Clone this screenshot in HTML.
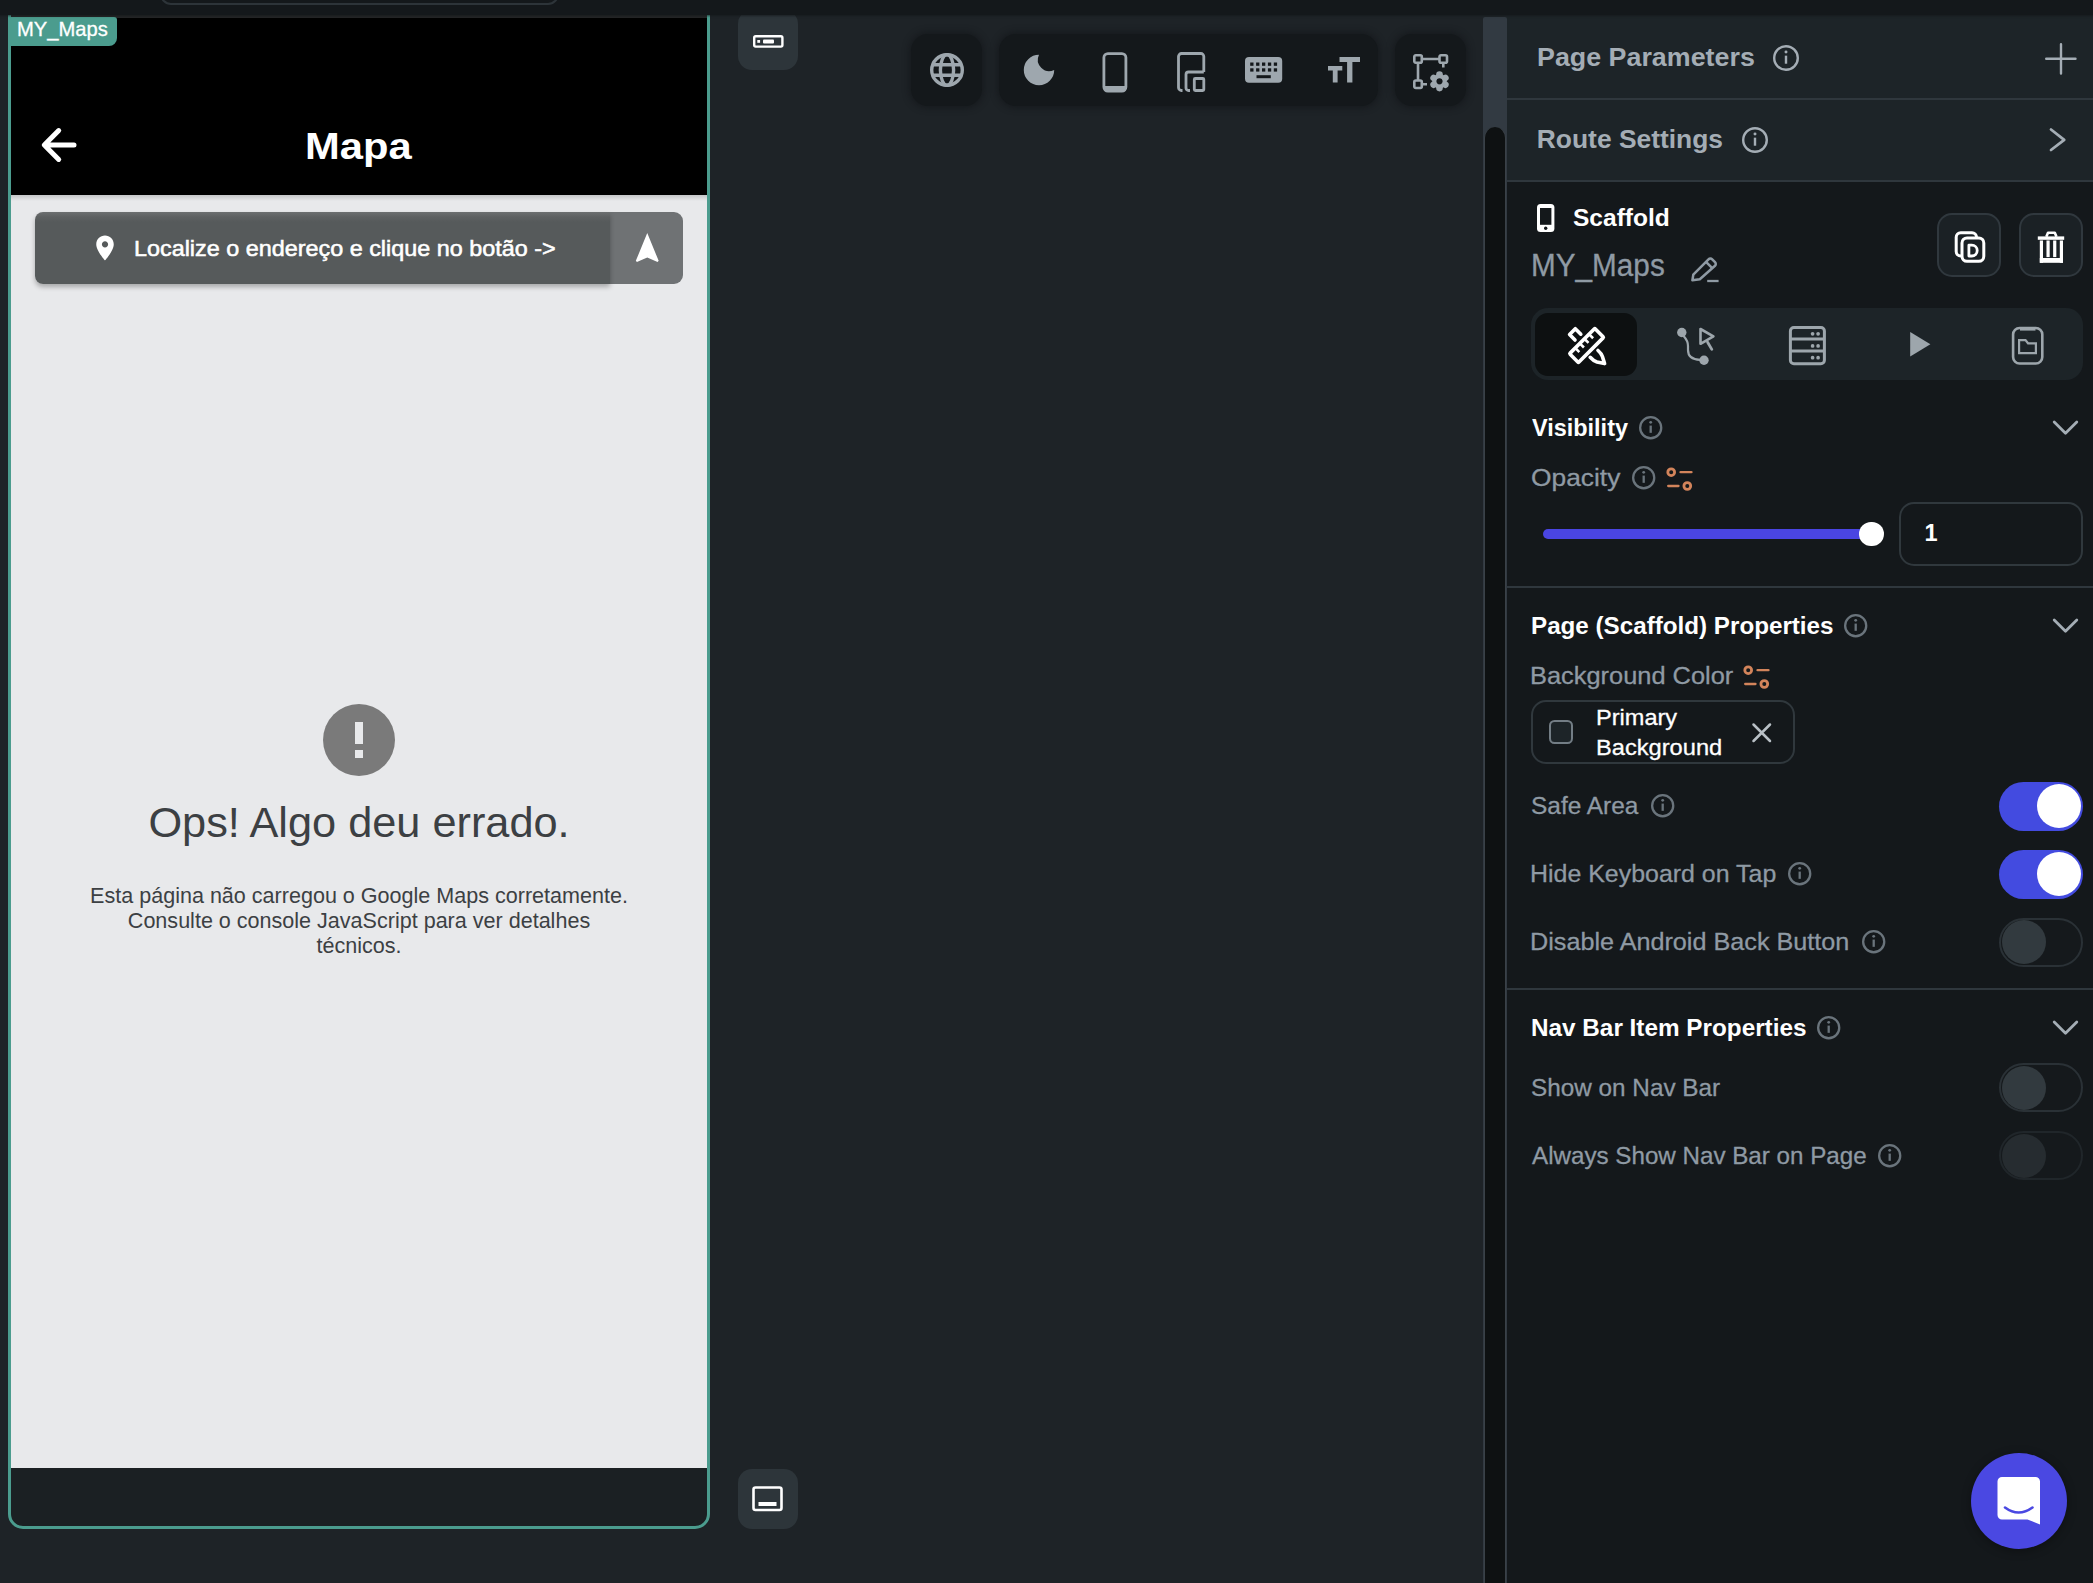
<!DOCTYPE html>
<html lang="en">
<head>
<meta charset="utf-8">
<title>MY_Maps</title>
<style>
*{box-sizing:border-box;margin:0;padding:0}
html,body{width:2093px;height:1583px;overflow:hidden;background:#1e2327;font-family:"Liberation Sans",sans-serif;}
.abs{position:absolute}
.t{position:absolute;white-space:pre;line-height:1;transform-origin:0 0}
#topbar{z-index:5;left:0;top:0;width:2093px;height:15px;background:#14181b;box-shadow:0 0 2px 1px rgba(20,24,27,.7)}
#urlbox{z-index:6;left:160px;top:-20px;width:399px;height:25px;border:2px solid #2d3439;border-radius:11px}
/* phone */
#phone{left:8px;top:8px;width:702px;height:1521px;border:3px solid #4b9c8e;border-radius:4px 4px 15px 15px;background:#1b2023;overflow:hidden}
#phdr{left:0;top:0;width:696px;height:184px;background:linear-gradient(#242526 0,#242526 6.500px,#000 7px)}
#pbody{left:0;top:184px;width:696px;height:1273px;background:#e8e9eb}
#pshadow{left:0;top:184px;width:696px;height:6px;background:linear-gradient(#c4c6c8,#e8e9eb)}
#plabel{left:8px;top:17px;width:109px;height:29px;background:#4b9c8e;border-radius:3px 3px 8px 3px}
/* search */
#sbar{left:35px;top:212px;width:575px;height:72px;background:linear-gradient(#6c6f70 0,#5d6061 5px,#565a5b 10px);border-radius:8px 0 0 8px;box-shadow:0 3px 5px rgba(0,0,0,.28)}
#sbtn{left:609px;top:212px;width:74px;height:72px;background:#6f7274;border-radius:0 9px 9px 0}
#sbar2{left:35px;top:212px;width:575px;height:72px;background:#585a5c;border-radius:7px 0 0 7px;box-shadow:2px 0 4px rgba(0,0,0,.25)}
/* right panel */
#track{left:1483px;top:17px;width:24px;height:1566px;background:#323a42;border-radius:2px 2px 0 0}
#thumb{left:1484px;top:127px;width:22px;height:1470px;background:#0e1112;border-radius:11px;border-left:1px solid #3a4147;border-right:1px solid #3a4147}
#rp{left:1507px;top:16px;width:586px;height:1567px;background:#14181b}
#rphead{left:1507px;top:16px;width:586px;height:166px;background:#1d2428}
.hr{position:absolute;left:1507px;width:586px;height:2px;background:#2f373d}
.tbox{position:absolute;background:#14181b;border-radius:17px;box-shadow:0 0 6px 2px rgba(16,19,22,.55)}
.sq{position:absolute;width:60px;height:60px;background:#2d353a;border-radius:14px}
.ob{position:absolute;border:2px solid #30383e;border-radius:15px;background:#1b2125}
.ob2{background:transparent;border-color:#30383d}
.tog{position:absolute;left:1999px;width:84px;height:49px;border-radius:25px}
.tog.on{background:#434be0}
.tog.off{border:2px solid #2a3136;background:#15191c}
.tog.dis{border:2px solid #20262a;background:#15191c}
.knob{position:absolute;width:44px;height:44px;border-radius:22px;top:2.5px}
.on .knob{left:38px;background:#fff}
.off .knob{left:1px;top:0.5px;background:#323a3f}
.dis .knob{left:1px;top:0.5px;background:#262c30}
svg{position:absolute;overflow:visible}
</style>
</head>
<body>
<!-- TOP BAR -->
<div id="topbar" class="abs"></div>
<div id="urlbox" class="abs"></div>

<!-- PHONE -->
<div id="phone" class="abs">
  <div id="phdr" class="abs"></div>
  <div id="pbody" class="abs"></div>
  <div id="pshadow" class="abs"></div>
</div>
<div id="plabel" class="abs"></div>

<span class="t" style="left:16.6px;top:18.6px;font-size:20.80px;color:#fff;transform:scaleX(0.9694);-webkit-text-stroke:0.3px #fff;">MY_Maps</span>
<svg style="left:0;top:0" width="720" height="300"><path d="M74 145H44.5M58.7 130.6L44.3 145l14.4 14.4" fill="none" stroke="#fff" stroke-width="5" stroke-linecap="round" stroke-linejoin="round"/></svg>
<span class="t" style="left:304.6px;top:127.8px;font-size:37.70px;color:#fff;font-weight:700;transform:scaleX(1.1062);">Mapa</span>
<div id="sbtn" class="abs"></div><div id="sbar" class="abs"></div>
<svg style="left:89.9px;top:232.8px" width="30" height="30" viewBox="0 0 24 24"><path fill="#fff" d="M12 2C8.13 2 5 5.13 5 9c0 5.25 7 13 7 13s7-7.75 7-13c0-3.87-3.130-7-7-7zm0 9.500c-1.380 0-2.500-1.120-2.500-2.500s1.120-2.500 2.500-2.500 2.500 1.120 2.500 2.500-1.120 2.500-2.500 2.500z"/></svg>
<span class="t" style="left:133.7px;top:236.7px;font-size:22.80px;color:#fff;transform:scaleX(1.0252);-webkit-text-stroke:0.55px #fff;">Localize o endereço e clique no botão -&gt;</span>
<svg style="left:628.6px;top:230.3px" width="36.5" height="36.5" viewBox="0 0 24 24"><path fill="#fff" d="M12 2L4.500 20.290l.710.710L12 18l6.790 3 .710-.710z"/></svg>
<div class="abs" style="left:322.8px;top:703.5px;width:72.4px;height:72.4px;border-radius:50%;background:#7a7a7a"></div>
<div class="abs" style="left:354.7px;top:721.9px;width:8.4px;height:22px;background:#e8e9eb"></div>
<div class="abs" style="left:354.7px;top:749.8px;width:8.4px;height:7.8px;background:#e8e9eb"></div>
<div class="abs" style="left:11px;top:800.6px;width:696px;text-align:center;font-size:43.3px;line-height:1;color:#3c4043;white-space:pre">Ops! Algo deu errado.</div>
<div class="abs" style="left:11px;top:883.1px;width:696px;text-align:center;font-size:21.56px;line-height:25.1px;color:#3c4043;white-space:pre">Esta página não carregou o Google Maps corretamente.
Consulte o console JavaScript para ver detalhes
técnicos.</div>

<div class="sq" style="left:738px;top:10px"></div>
<div class="sq" style="left:738px;top:1469px"></div>
<svg style="left:753px;top:34.5px" width="31" height="13"><rect x="1.2" y="1.2" width="28.2" height="10.4" rx="1.5" fill="none" stroke="#fff" stroke-width="2.4"/><rect x="10" y="4.4" width="11" height="4" rx="1" fill="#fff"/><rect x="4.3" y="5" width="2.8" height="2.8" fill="#fff"/></svg>
<svg style="left:752px;top:1486px" width="32" height="27"><rect x="1.5" y="1.5" width="28" height="22.5" rx="2" fill="none" stroke="#fff" stroke-width="2.6"/><rect x="6.5" y="16" width="18" height="4" fill="#fff"/></svg>
<div class="tbox" style="left:911px;top:34px;width:71px;height:72px"></div>
<div class="tbox" style="left:999px;top:34px;width:379px;height:72px"></div>
<div class="tbox" style="left:1395px;top:34px;width:71px;height:72px"></div>
<svg style="left:927px;top:50px" width="40" height="40" viewBox="-20 -20 40 40"><g fill="none" stroke="#9ea7ae" stroke-width="3.400"><circle r="15.300"/><ellipse rx="6.6" ry="15.4"/><path d="M-15 -5.200H15M-15 5.200H15"/></g></svg>
<svg style="left:1019.2px;top:50px" width="40" height="40" viewBox="-20 -20 40 40"><path fill="#9ea7ae" d="M0 -15.200A15.200 15.200 0 1 0 15.200 0A11.400 11.400 0 0 1 0 -15.200Z"/></svg>
<svg style="left:1100px;top:50px" width="30" height="45"><rect x="3.900" y="3.600" width="22" height="37.500" rx="4" fill="none" stroke="#9ea7ae" stroke-width="2.800"/><path d="M4 36h22v2.500a3 3 0 0 1-3 3H7a3 3 0 0 1-3-3z" fill="#9ea7ae"/></svg>
<svg style="left:1175px;top:50px" width="34" height="45"><g fill="none" stroke="#9ea7ae" stroke-width="2.800"><path d="M7.500 40.500H6.500a3 3 0 0 1-3-3V6.500a3 3 0 0 1 3-3H25.800a3 3 0 0 1 3 3V22"/><path d="M15 40.500h-1.500a2.500 2.500 0 0 1-2.500-2.500V24.500a2.500 2.500 0 0 1 2.500-2.500H28.800"/><rect x="19.300" y="28.500" width="9.500" height="12" rx="1"/></g></svg>
<svg style="left:1244.5px;top:57px" width="37.500" height="26"><rect x="0" y="0" width="37.200" height="25.700" rx="4" fill="#9ea7ae"/><g fill="#14181b"><rect x="5.2" y="5.5" width="3.300" height="3.300"/><rect x="11.1" y="5.5" width="3.300" height="3.300"/><rect x="17.0" y="5.5" width="3.300" height="3.300"/><rect x="22.9" y="5.5" width="3.300" height="3.300"/><rect x="28.8" y="5.5" width="3.300" height="3.300"/><rect x="5.2" y="11.3" width="3.300" height="3.300"/><rect x="11.1" y="11.3" width="3.300" height="3.300"/><rect x="17.0" y="11.3" width="3.300" height="3.300"/><rect x="22.9" y="11.3" width="3.300" height="3.300"/><rect x="28.8" y="11.3" width="3.300" height="3.300"/><rect x="11.500" y="18.200" width="14.300" height="3"/></g></svg>
<svg style="left:1328px;top:56.5px" width="32" height="26"><path fill="#9ea7ae" d="M11.500 0H32V5H24.400V25.400H19.100V5H11.500zM0 9H14.300V13.600H9.600V25.400H4.800V13.600H0z"/></svg>
<svg style="left:1412px;top:52.5px" width="39" height="38"><g fill="none" stroke="#9ea7ae" stroke-width="2.600"><rect x="2.300" y="2.300" width="7.500" height="7.500" rx="1.500"/><rect x="27.500" y="2.300" width="7.500" height="7.500" rx="1.500"/><rect x="2.300" y="27.500" width="7.500" height="7.500" rx="1.500"/><path d="M9.800 6H27.500M6 9.800V27.500M31.300 9.800V14.500M9.800 31.300H15"/></g><g transform="translate(27.500 28.300)"><circle r="5.200" fill="none" stroke="#9ea7ae" stroke-width="4.200"/><circle r="3.300" cx="0" cy="-6.800" fill="#9ea7ae" transform="rotate(0)"/><circle r="3.300" cx="0" cy="-6.800" fill="#9ea7ae" transform="rotate(60)"/><circle r="3.300" cx="0" cy="-6.800" fill="#9ea7ae" transform="rotate(120)"/><circle r="3.300" cx="0" cy="-6.800" fill="#9ea7ae" transform="rotate(180)"/><circle r="3.300" cx="0" cy="-6.800" fill="#9ea7ae" transform="rotate(240)"/><circle r="3.300" cx="0" cy="-6.800" fill="#9ea7ae" transform="rotate(300)"/><circle r="2.200" fill="#14181b"/></g></svg>

<div id="track" class="abs"></div><div id="thumb" class="abs"></div><div id="rp" class="abs"></div><div id="rphead" class="abs"></div>
<div class="hr" style="top:98px"></div><div class="hr" style="top:180px"></div><div class="hr" style="top:586px"></div><div class="hr" style="top:988px"></div>
<span class="t" style="left:1536.8px;top:43.9px;font-size:26.60px;color:#a4adb5;font-weight:700;transform:scaleX(1.0091);">Page Parameters</span>
<svg style="left:1770.6px;top:43.0px" width="30" height="30" viewBox="-15 -15 30 30"><circle r="11.80" fill="none" stroke="#a4adb5" stroke-width="2.4"/><rect x="-1.20" y="-2.34" width="2.4" height="8.06" fill="#a4adb5"/><circle cx="0" cy="-5.98" r="1.49" fill="#a4adb5"/></svg>
<svg style="left:2044px;top:42px" width="34" height="34"><path d="M17 2.200V31.500M2.200 16.800H31.500" fill="none" stroke="#a4adb5" stroke-width="2.400" stroke-linecap="round"/></svg>
<span class="t" style="left:1536.8px;top:126.4px;font-size:26.40px;color:#a4adb5;font-weight:700;">Route Settings</span>
<svg style="left:1740.0px;top:125.0px" width="30" height="30" viewBox="-15 -15 30 30"><circle r="11.80" fill="none" stroke="#a4adb5" stroke-width="2.4"/><rect x="-1.20" y="-2.34" width="2.4" height="8.06" fill="#a4adb5"/><circle cx="0" cy="-5.98" r="1.49" fill="#a4adb5"/></svg>
<svg style="left:2046px;top:126px" width="24" height="28"><path d="M5 3.500L18.200 13.800L5 24" fill="none" stroke="#a4adb5" stroke-width="2.800" stroke-linecap="round" stroke-linejoin="round"/></svg>
<svg style="left:1536.700px;top:204px" width="18" height="29"><rect x="0" y="0" width="17.400" height="28" rx="3.500" fill="#fff"/><rect x="3" y="4" width="11.400" height="16.800" fill="#14181b"/><circle cx="8.700" cy="24.300" r="1.700" fill="#14181b"/></svg>
<span class="t" style="left:1573.4px;top:206.2px;font-size:24.20px;color:#fff;font-weight:700;transform:scaleX(1.0144);">Scaffold</span>
<span class="t" style="left:1530.6px;top:249.8px;font-size:30.60px;color:#8f9aa4;transform:scaleX(0.9711);-webkit-text-stroke:0.3px #8f9aa4;">MY_Maps</span>
<svg style="left:1689px;top:255px" width="32" height="30"><g fill="none" stroke="#8f9aa4" stroke-width="2.500" stroke-linejoin="round" stroke-linecap="butt"><path d="M3.400 25.300L4.300 19.700L19.500 4.300a2.600 2.600 0 0 1 3.700 0L26 7.100a2.600 2.600 0 0 1 0 3.700L10.800 24.200Z"/><path d="M17 6.800L23.500 13.300"/><path d="M18.200 26H29.600" stroke-width="2.300"/></g></svg>
<div class="ob" style="left:1937px;top:213px;width:64px;height:64px"></div><div class="ob" style="left:2019px;top:213px;width:64px;height:64px"></div>
<svg style="left:1950px;top:226px" width="40" height="40"><g fill="none" stroke="#fff" stroke-width="3"><path d="M11.500 30H10.700a4.500 4.500 0 0 1-4.500-4.500V11.200A4.500 4.500 0 0 1 10.700 6.700H22a4.500 4.500 0 0 1 4.500 4.500"/><rect x="12" y="11.900" width="21.800" height="23.400" rx="5"/></g><path d="M18.900 19.200V30H21.800a5.400 5.400 0 0 0 0-10.800Z" fill="none" stroke="#fff" stroke-width="2.800" stroke-linejoin="round"/></svg>
<svg style="left:2035px;top:228px" width="32" height="38"><g fill="#fff"><rect x="2.800" y="8.400" width="26.400" height="3.400"/><rect x="4.800" y="12.500" width="3.200" height="22.300"/><rect x="24.800" y="12.500" width="3.200" height="22.300"/><rect x="4.800" y="30" width="23.200" height="4.800"/><rect x="11.470" y="12.500" width="3.200" height="16.600"/><rect x="18.130" y="12.500" width="3.200" height="16.600"/></g><path d="M11.300 8.800L13 4.700H19.800L21.500 8.800" fill="none" stroke="#fff" stroke-width="2.600" stroke-linejoin="round"/></svg>
<div class="abs" style="left:1531px;top:308px;width:552px;height:72px;border-radius:17px;background:#1d2428"></div>
<div class="abs" style="left:1535px;top:312.500px;width:102px;height:63px;border-radius:13px;background:#0d1011"></div>
<svg style="left:1556px;top:316px" width="60" height="60"><g fill="none" stroke="#fff" stroke-width="3.600" stroke-linejoin="round" stroke-linecap="round"><path d="M24.800 18.200L19.300 12.700L13.600 18.500L19 24"/><path d="M42 34.500Q45.500 37.500 46.400 40.500L48.600 47.600L41 46Q37.500 45 34.200 41.300"/><g transform="translate(30.600 29.500) rotate(-45)"><rect x="-17.850" y="-6.250" width="35.700" height="12.500" rx="0.800"/><path d="M-9.800 -6V-0.500M-3.300 -6V-0.500M3.200 -6V-0.500M9.700 -6V-0.500" stroke-width="2.600" stroke-linecap="butt"/></g></g></svg>
<svg style="left:1667px;top:316px" width="60" height="60"><circle cx="14.800" cy="16.500" r="4.700" fill="#9da6ac"/><circle cx="37" cy="44.200" r="4.700" fill="#9da6ac"/><g fill="none" stroke="#9da6ac" stroke-linecap="round" stroke-linejoin="round"><path d="M17 20.500Q21 25 21 30V34Q21 43.500 33 43.800" stroke-width="2.200"/><path d="M33.500 13V27.800L46.400 20.300Z" stroke-width="2.600"/><path d="M40.600 26.200L44.800 33.400" stroke-width="2.800"/></g></svg>
<svg style="left:1777px;top:316px" width="60" height="60"><g fill="none" stroke="#9da6ac" stroke-width="3"><rect x="13.400" y="11.500" width="34" height="36.300" rx="3.500"/><path d="M13.400 22.900H47.400M13.400 34.900H47.400"/></g><g fill="#9da6ac"><circle cx="35.6" cy="17.8" r="1.850"/><circle cx="41.1" cy="17.8" r="1.850"/><circle cx="35.6" cy="29.9" r="1.850"/><circle cx="41.1" cy="29.9" r="1.850"/><circle cx="35.6" cy="41.7" r="1.850"/><circle cx="41.1" cy="41.7" r="1.850"/></g></svg>
<svg style="left:1900px;top:325px" width="40" height="40"><path d="M10.200 7V31.400L30.400 19.200Z" fill="#9da6ac"/></svg>
<svg style="left:2005px;top:320px" width="46" height="52"><g fill="none" stroke="#9da6ac"><rect x="8.100" y="8" width="29.200" height="35.500" rx="6.500" stroke-width="2.600"/><path d="M15 8.800H30.500" stroke-width="3.600"/><path d="M14.100 33.200V20.100H20.500L23 23.300H30.900V33.200Z" stroke-width="2.200"/></g></svg>
<span class="t" style="left:1532.0px;top:416.0px;font-size:24.20px;color:#fff;font-weight:700;transform:scaleX(0.9691);">Visibility</span>
<svg style="left:1637.3px;top:414.3px" width="27.4" height="27.4" viewBox="-13.7 -13.7 27.4 27.4"><circle r="10.55" fill="none" stroke="#6a747c" stroke-width="2.3"/><rect x="-1.15" y="-2.11" width="2.3" height="7.25" fill="#6a747c"/><circle cx="0" cy="-5.38" r="1.43" fill="#6a747c"/></svg>
<svg style="left:2050px;top:416.5px" width="32" height="24"><path d="M4.200 5L15.500 16.200L26.800 5" fill="none" stroke="#a4adb5" stroke-width="2.800" stroke-linecap="round" stroke-linejoin="round"/></svg>
<span class="t" style="left:1530.9px;top:465.6px;font-size:24.60px;color:#8f9aa4;transform:scaleX(1.0713);-webkit-text-stroke:0.3px #8f9aa4;">Opacity</span>
<svg style="left:1629.9px;top:464.3px" width="27.4" height="27.4" viewBox="-13.7 -13.7 27.4 27.4"><circle r="10.55" fill="none" stroke="#6a747c" stroke-width="2.3"/><rect x="-1.15" y="-2.11" width="2.3" height="7.25" fill="#6a747c"/><circle cx="0" cy="-5.38" r="1.43" fill="#6a747c"/></svg>
<svg style="left:1666.4px;top:466.8px" width="29" height="25"><g fill="none" stroke="#d3845b" stroke-width="2.300" stroke-linecap="round"><circle cx="5.200" cy="5.200" r="3.400" stroke-width="2.800"/><path d="M14.500 5.200H25.500"/><circle cx="21.300" cy="19" r="3.400" stroke-width="2.800"/><path d="M2.200 19H12.500"/></g></svg>
<div class="abs" style="left:1543px;top:529px;width:330px;height:10px;border-radius:5px;background:#4a45e2"></div>
<div class="abs" style="left:1859.300px;top:522px;width:24.300px;height:24.300px;border-radius:50%;background:#fff"></div>
<div class="ob ob2" style="left:1899px;top:502px;width:184px;height:64px"></div>
<span class="t" style="left:1924.5px;top:522.4px;font-size:23.50px;color:#fff;font-weight:700;">1</span>
<span class="t" style="left:1531.0px;top:613.8px;font-size:24.30px;color:#fff;font-weight:700;transform:scaleX(0.9958);">Page (Scaffold) Properties</span>
<svg style="left:1841.9px;top:612.3px" width="27.4" height="27.4" viewBox="-13.7 -13.7 27.4 27.4"><circle r="10.55" fill="none" stroke="#6a747c" stroke-width="2.3"/><rect x="-1.15" y="-2.11" width="2.3" height="7.25" fill="#6a747c"/><circle cx="0" cy="-5.38" r="1.43" fill="#6a747c"/></svg>
<svg style="left:2050px;top:614.5px" width="32" height="24"><path d="M4.200 5L15.500 16.200L26.800 5" fill="none" stroke="#a4adb5" stroke-width="2.800" stroke-linecap="round" stroke-linejoin="round"/></svg>
<span class="t" style="left:1529.9px;top:664.3px;font-size:24.60px;color:#8f9aa4;transform:scaleX(1.0325);-webkit-text-stroke:0.3px #8f9aa4;">Background Color</span>
<svg style="left:1742.6px;top:665.2px" width="29" height="25"><g fill="none" stroke="#d3845b" stroke-width="2.300" stroke-linecap="round"><circle cx="5.200" cy="5.200" r="3.400" stroke-width="2.800"/><path d="M14.500 5.200H25.500"/><circle cx="21.300" cy="19" r="3.400" stroke-width="2.800"/><path d="M2.200 19H12.500"/></g></svg>
<div class="ob ob2" style="left:1531px;top:700px;width:263.500px;height:64px"></div>
<div class="abs" style="left:1549.200px;top:720px;width:24px;height:24px;border:2px solid #737d85;border-radius:5.500px;background:#1d2428"></div>
<span class="t" style="left:1596.0px;top:707.4px;font-size:22.60px;color:#fff;transform:scaleX(1.0423);-webkit-text-stroke:0.3px #fff;">Primary</span>
<span class="t" style="left:1596.0px;top:737.0px;font-size:22.60px;color:#fff;transform:scaleX(1.0469);-webkit-text-stroke:0.3px #fff;">Background</span>
<svg style="left:1750px;top:720.500px" width="24" height="24"><path d="M3.500 3.500L20 20M20 3.500L3.500 20" fill="none" stroke="#b9c0c6" stroke-width="2.500" stroke-linecap="round"/></svg>
<span class="t" style="left:1531.0px;top:793.7px;font-size:24.60px;color:#8f9aa4;transform:scaleX(0.9936);-webkit-text-stroke:0.3px #8f9aa4;">Safe Area</span>
<svg style="left:1649.0px;top:792.3px" width="27.4" height="27.4" viewBox="-13.7 -13.7 27.4 27.4"><circle r="10.55" fill="none" stroke="#6a747c" stroke-width="2.3"/><rect x="-1.15" y="-2.11" width="2.3" height="7.25" fill="#6a747c"/><circle cx="0" cy="-5.38" r="1.43" fill="#6a747c"/></svg>
<div class="tog on" style="top:781.500px"><div class="knob"></div></div>
<span class="t" style="left:1530.0px;top:861.8px;font-size:24.60px;color:#8f9aa4;transform:scaleX(1.0138);-webkit-text-stroke:0.3px #8f9aa4;">Hide Keyboard on Tap</span>
<svg style="left:1785.7px;top:860.3px" width="27.4" height="27.4" viewBox="-13.7 -13.7 27.4 27.4"><circle r="10.55" fill="none" stroke="#6a747c" stroke-width="2.3"/><rect x="-1.15" y="-2.11" width="2.3" height="7.25" fill="#6a747c"/><circle cx="0" cy="-5.38" r="1.43" fill="#6a747c"/></svg>
<div class="tog on" style="top:849.500px"><div class="knob"></div></div>
<span class="t" style="left:1530.0px;top:929.9px;font-size:24.60px;color:#8f9aa4;transform:scaleX(1.0245);-webkit-text-stroke:0.3px #8f9aa4;">Disable Android Back Button</span>
<svg style="left:1859.8px;top:928.0px" width="27.4" height="27.4" viewBox="-13.7 -13.7 27.4 27.4"><circle r="10.55" fill="none" stroke="#6a747c" stroke-width="2.3"/><rect x="-1.15" y="-2.11" width="2.3" height="7.25" fill="#6a747c"/><circle cx="0" cy="-5.38" r="1.43" fill="#6a747c"/></svg>
<div class="tog off" style="top:917.500px"><div class="knob"></div></div>
<span class="t" style="left:1531.0px;top:1016.1px;font-size:24.30px;color:#fff;font-weight:700;">Nav Bar Item Properties</span>
<svg style="left:1814.7px;top:1014.3px" width="27.4" height="27.4" viewBox="-13.7 -13.7 27.4 27.4"><circle r="10.55" fill="none" stroke="#6a747c" stroke-width="2.3"/><rect x="-1.15" y="-2.11" width="2.3" height="7.25" fill="#6a747c"/><circle cx="0" cy="-5.38" r="1.43" fill="#6a747c"/></svg>
<svg style="left:2050px;top:1016.5px" width="32" height="24"><path d="M4.200 5L15.500 16.200L26.800 5" fill="none" stroke="#a4adb5" stroke-width="2.800" stroke-linecap="round" stroke-linejoin="round"/></svg>
<span class="t" style="left:1531.0px;top:1075.9px;font-size:24.60px;color:#8f9aa4;transform:scaleX(0.9885);-webkit-text-stroke:0.3px #8f9aa4;">Show on Nav Bar</span>
<div class="tog off" style="top:1063.300px"><div class="knob"></div></div>
<span class="t" style="left:1532.0px;top:1143.7px;font-size:24.60px;color:#8f9aa4;transform:scaleX(0.9832);-webkit-text-stroke:0.3px #8f9aa4;">Always Show Nav Bar on Page</span>
<svg style="left:1876.3px;top:1142.3px" width="27.4" height="27.4" viewBox="-13.7 -13.7 27.4 27.4"><circle r="10.55" fill="none" stroke="#6a747c" stroke-width="2.3"/><rect x="-1.15" y="-2.11" width="2.3" height="7.25" fill="#6a747c"/><circle cx="0" cy="-5.38" r="1.43" fill="#6a747c"/></svg>
<div class="tog dis" style="top:1131.400px"><div class="knob"></div></div>
<div class="abs" style="left:1971px;top:1453px;width:96px;height:96px;border-radius:50%;background:#4a48e2;box-shadow:0 2px 10px rgba(0,0,0,.35)"></div>
<svg style="left:1997px;top:1476px" width="46" height="50"><path fill="#fff" d="M5 1H38.500A4.500 4.500 0 0 1 43 5.500V48.500L30.500 43.500H5A4.500 4.500 0 0 1 .500 39V5.500A4.500 4.500 0 0 1 5 1Z"/><path d="M8 31.500Q21.500 41.500 35.500 31.500" fill="none" stroke="#4a48e2" stroke-width="2.600" stroke-linecap="round"/></svg>

</body>
</html>
